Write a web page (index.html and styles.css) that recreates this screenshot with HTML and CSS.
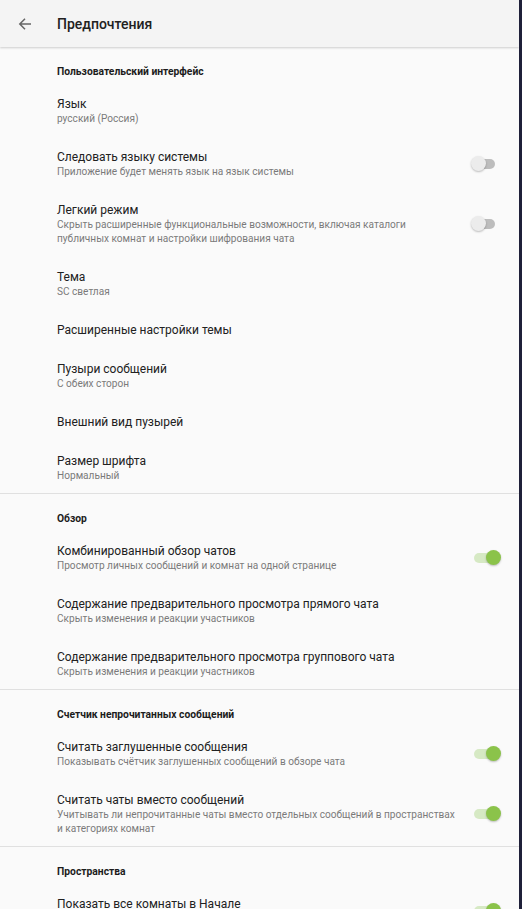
FILE: index.html
```html
<!DOCTYPE html>
<html lang="ru">
<head>
<meta charset="utf-8">
<link rel="stylesheet" href="styles.css">
</head>
<body>
<div class="window">
  <main class="screen">
    <header class="toolbar">
      <span class="back">
        <svg width="14" height="14" viewBox="0 0 14 14"><path d="M13 7H2.2M7 1.8L1.8 7 7 12.2" fill="none" stroke="#666" stroke-width="1.5"/></svg>
      </span>
      <h1 class="title">Предпочтения</h1>
    </header>
    <div class="content">
      <section class="section">
        <h2 class="cat">Пользовательский интерфейс</h2>
        <div class="item"><div class="text"><div class="t">Язык</div><div class="s">русский (Россия)</div></div></div>
        <div class="item"><div class="text"><div class="t">Следовать языку системы</div><div class="s">Приложение будет менять язык на язык системы</div></div><span class="sw"><span class="track"></span><span class="thumb"></span></span></div>
        <div class="item"><div class="text"><div class="t">Легкий режим</div><div class="s">Скрыть расширенные функциональные возможности, включая каталоги публичных комнат и настройки шифрования чата</div></div><span class="sw"><span class="track"></span><span class="thumb"></span></span></div>
        <div class="item"><div class="text"><div class="t">Тема</div><div class="s">SC светлая</div></div></div>
        <div class="item"><div class="text"><div class="t">Расширенные настройки темы</div></div></div>
        <div class="item"><div class="text"><div class="t">Пузыри сообщений</div><div class="s">С обеих сторон</div></div></div>
        <div class="item"><div class="text"><div class="t">Внешний вид пузырей</div></div></div>
        <div class="item"><div class="text"><div class="t">Размер шрифта</div><div class="s">Нормальный</div></div></div>
      </section>
      <section class="section">
        <h2 class="cat">Обзор</h2>
        <div class="item"><div class="text"><div class="t">Комбинированный обзор чатов</div><div class="s">Просмотр личных сообщений и комнат на одной странице</div></div><span class="sw on"><span class="track"></span><span class="thumb"></span></span></div>
        <div class="item"><div class="text"><div class="t">Содержание предварительного просмотра прямого чата</div><div class="s">Скрыть изменения и реакции участников</div></div></div>
        <div class="item"><div class="text"><div class="t">Содержание предварительного просмотра группового чата</div><div class="s">Скрыть изменения и реакции участников</div></div></div>
      </section>
      <section class="section">
        <h2 class="cat">Счетчик непрочитанных сообщений</h2>
        <div class="item"><div class="text"><div class="t">Считать заглушенные сообщения</div><div class="s">Показывать счётчик заглушенных сообщений в обзоре чата</div></div><span class="sw on"><span class="track"></span><span class="thumb"></span></span></div>
        <div class="item"><div class="text"><div class="t">Считать чаты вместо сообщений</div><div class="s">Учитывать ли непрочитанные чаты вместо отдельных сообщений в пространствах и категориях комнат</div></div><span class="sw on"><span class="track"></span><span class="thumb"></span></span></div>
      </section>
      <section class="section">
        <h2 class="cat">Пространства</h2>
        <div class="item"><div class="text"><div class="t">Показать все комнаты в Начале</div><div class="s">Показывать комнаты, не входящие в пространства</div></div><span class="sw on"><span class="track"></span><span class="thumb"></span></span></div>
      </section>
    </div>
  </main>
  <div class="edge"></div>
</div>
</body>
</html>
```

FILE: styles.css
```css
html, body {
  margin: 0;
  padding: 0;
  height: 100%;
  overflow: hidden;
}
body {
  font-family: Roboto, "Noto Sans", sans-serif;
  background: #fafafa;
  color: #212121;
}
.window {
  display: flex;
  height: 909px;
}
.screen {
  width: 519px;
  background: #fafafa;
  display: flex;
  flex-direction: column;
  overflow: hidden;
}
.edge {
  width: 3px;
  background: #1f2039;
}
.toolbar {
  height: 47px;
  flex: none;
  background: #f4f4f4;
  display: flex;
  align-items: center;
  box-shadow: 0 1px 2px rgba(0,0,0,0.18);
  position: relative;
  z-index: 1;
}
.back {
  width: 57px;
  display: flex;
  justify-content: center;
  padding-right: 7px;
  box-sizing: border-box;
}
.back svg { display: block; }
.title {
  margin: 0;
  font-size: 14px;
  font-weight: 500;
  color: #212121;
}
.section {
  border-bottom: 1px solid #e0e0e0;
}
.cat {
  margin: 0;
  padding: 19px 0 5px 57px;
  font-size: 10.3px;
  line-height: 12px;
  font-weight: 700;
  color: #1c1c1c;
}
.item {
  display: flex;
  align-items: center;
  padding: 13px 18px 10px 57px;
}
.text {
  flex: 1;
  max-width: 398px;
  margin-right: auto;
}
.t {
  font-size: 12px;
  line-height: 16px;
  color: #212121;
}
.s {
  font-size: 10.1px;
  line-height: 14px;
  color: #7a7a7a;
}
.sw {
  position: relative;
  width: 30px;
  height: 16px;
  flex: none;
}
.track {
  position: absolute;
  left: 3px;
  top: 3px;
  width: 21px;
  height: 10px;
  border-radius: 5px;
  background: #bdbdbd;
}
.thumb {
  position: absolute;
  left: 0;
  top: 0;
  width: 15px;
  height: 15px;
  border-radius: 50%;
  background: #ececec;
  box-shadow: 0 1px 2px rgba(0,0,0,0.25);
}
.sw.on .track {
  background: #d6e9c4;
}
.sw.on .thumb {
  left: auto;
  right: 0;
  background: #8bc34a;
}
```
